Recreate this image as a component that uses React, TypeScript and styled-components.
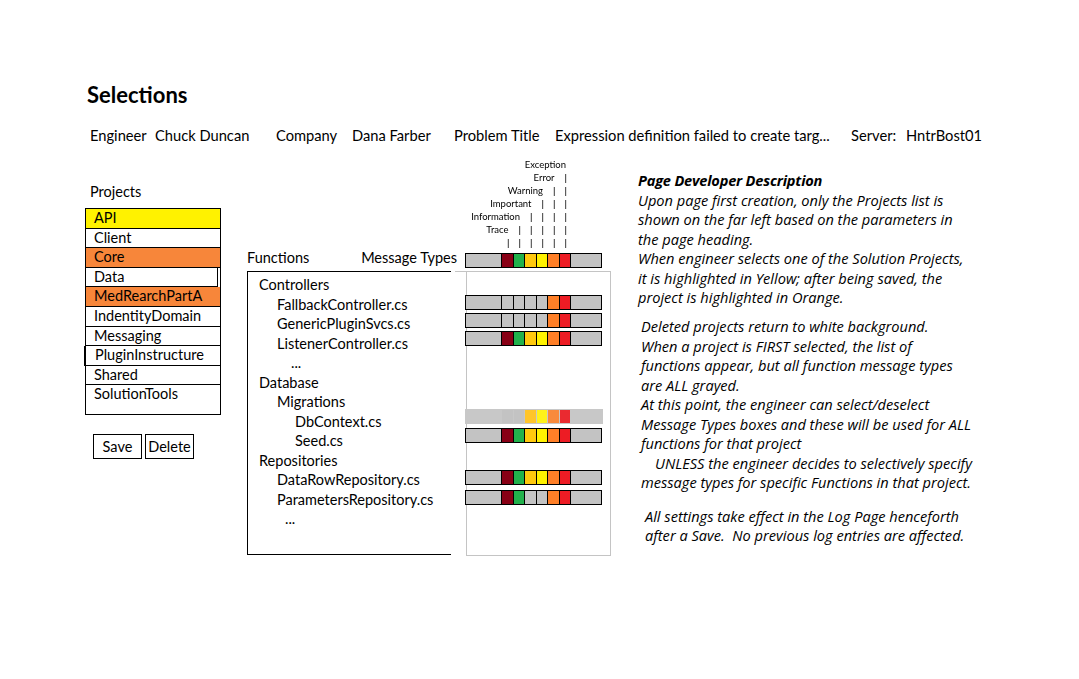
import React from "react";
import styled, { createGlobalStyle } from "styled-components";

const GlobalStyle = createGlobalStyle`
  html, body {
    margin: 0;
    padding: 0;
    background: #fff;
  }
  body {
    font-family: Lato, "Open Sans", "Liberation Sans", sans-serif;
    color: #000;
  }
`;

const COLORS = ["#880015", "#22b14c", "#ffc90e", "#fff200", "#ff7f27", "#ed1c24"];
const GHOST = ["#c8c8c8", "#c8c8c8", "#ffc52a", "#fff21a", "#f98a3c", "#ea2a30"];

const Page = styled.div`
  width: 1079px;
  height: 679px;
  box-sizing: border-box;
  padding: 82px 0 0 85px;
  overflow: hidden;
`;

const Title = styled.h1`
  margin: 0 0 0 2px;
  font-size: 22px;
  font-weight: 700;
  line-height: 25px;
`;

const InfoRow = styled.div`
  display: flex;
  margin: 18px 0 0 5px;
  font-size: 14.7px;
  line-height: 20px;
  white-space: nowrap;
`;

const Field = styled.div<{ $width?: number }>`
  display: flex;
  flex-shrink: 0;
  width: ${(p) => (p.$width ? `${p.$width}px` : "auto")};
`;

const FieldLabel = styled.span<{ $width: number }>`
  width: ${(p) => p.$width}px;
  flex-shrink: 0;
`;

const Main = styled.div`
  display: flex;
  align-items: flex-start;
  margin-top: 13px;
`;

/* ---- projects ---- */

const LeftColumn = styled.div`
  width: 136px;
  margin-right: 26px;
  flex-shrink: 0;
`;

const SectionLabel = styled.div`
  margin: 25px 0 7px 5px;
  font-size: 14.5px;
  line-height: 18px;
`;

const ProjectList = styled.div`
  box-sizing: border-box;
  width: 136px;
  border: 1.5px solid #000;
  padding-bottom: 9px;
`;

const ProjectRow = styled.div<{ $fill?: string; $inset?: boolean; $shift?: boolean; $last?: boolean }>`
  box-sizing: border-box;
  height: 19.6px;
  line-height: 18.6px;
  padding-left: ${(p) => (p.$shift ? 10 : 8)}px;
  font-size: 14.5px;
  white-space: nowrap;
  background: ${(p) => p.$fill || "transparent"};
  border-bottom: ${(p) => (p.$last ? "none" : "1px solid #000")};
  ${(p) => p.$inset && "border-right: 1px solid #000; margin-right: 2px;"}
  ${(p) => p.$shift && "border-left: 1px solid #000; margin-left: -2px;"}
`;

const ButtonRow = styled.div`
  display: flex;
  gap: 3px;
  margin: 19px 0 0 8px;
`;

const Button = styled.button`
  box-sizing: border-box;
  width: 49px;
  height: 25px;
  padding: 0;
  border: 1px solid #000;
  background: #fff;
  font-family: inherit;
  font-size: 14.5px;
  color: #000;
`;

/* ---- functions ---- */

const MiddleColumn = styled.div`
  width: 364px;
  margin-right: 27px;
  flex-shrink: 0;
`;

const TickChart = styled.div`
  width: 106px;
  margin-left: 218px;
  font-size: 9.5px;
  white-space: nowrap;
  will-change: transform;
`;

const TickRow = styled.div`
  display: flex;
  justify-content: flex-end;
  align-items: center;
  height: 13px;
`;

const TickLabel = styled.span`
  margin-right: 5px;
`;

const Pipe = styled.span`
  width: 11.5px;
  text-align: center;
  padding-left: 1px;
  box-sizing: border-box;
  font-family: "Liberation Sans", sans-serif;
`;

const HeaderRow = styled.div`
  display: flex;
  align-items: flex-start;
  height: 19px;
`;

const HeaderLabels = styled.div`
  display: flex;
  justify-content: space-between;
  box-sizing: border-box;
  width: 218px;
  padding-right: 8px;
  font-size: 14.5px;
  line-height: 18px;
  white-space: nowrap;
`;

const HeaderBarSlot = styled.div`
  margin-top: 4px;
`;

const Panel = styled.div`
  display: flex;
  margin-top: 3px;
  height: 285px;
`;

const TreeBox = styled.div`
  box-sizing: border-box;
  width: 204px;
  height: 284px;
  margin-right: 15px;
  padding-top: 3px;
  border: 1px solid #000;
  border-right: none;
`;

const TreeItem = styled.div<{ $indent: number }>`
  height: 19.5px;
  line-height: 19.5px;
  padding-left: ${(p) => p.$indent}px;
  font-size: 14.5px;
  white-space: nowrap;
`;

const BarBox = styled.div`
  position: relative;
  box-sizing: border-box;
  width: 145px;
  height: 285px;
  border: 1px solid #c4c4c4;

  &::before {
    content: "";
    position: absolute;
    top: -1px;
    left: -12px;
    width: 11px;
    border-top: 1px solid #c4c4c4;
  }
`;

const BarTrack = styled.div<{ $gap?: number; $ghost?: boolean }>`
  display: flex;
  box-sizing: border-box;
  width: ${(p) => (p.$ghost ? 138 : 137)}px;
  height: 15px;
  margin-top: ${(p) => p.$gap ?? 0}px;
  margin-left: ${(p) => (p.$gap === undefined ? 0 : -2)}px;
  border: 1px solid ${(p) => (p.$ghost ? "#c8c8c8" : "#000")};
  background: ${(p) => (p.$ghost ? "#c8c8c8" : "#c3c3c3")};
  flex-shrink: 0;
`;

const BarFiller = styled.div<{ $width?: number; $ghost?: boolean; $edge?: boolean }>`
  box-sizing: border-box;
  ${(p) => (p.$width ? `width: ${p.$width}px;` : "flex: 1;")}
  ${(p) => p.$edge && `border-left: 1px solid ${p.$ghost ? "transparent" : "#000"};`}
`;

const Segment = styled.div<{ $color: string; $ghost?: boolean }>`
  box-sizing: border-box;
  width: 11.5px;
  background: ${(p) => p.$color};
  border-left: 1px solid ${(p) => (p.$ghost ? "#c8c8c8" : "#000")};
`;

/* ---- description ---- */

const Description = styled.div`
  margin-top: 13px;
  font-family: "Open Sans", Lato, sans-serif;
  font-size: 14.6px;
  font-style: italic;
  white-space: nowrap;
`;

const Block = styled.div<{ $gap?: number; $indent?: number; $lh?: number }>`
  margin-top: ${(p) => p.$gap ?? 0}px;
  padding-left: ${(p) => p.$indent ?? 0}px;
  line-height: ${(p) => p.$lh ?? 19.5}px;
`;

const Line = styled.div<{ $indent?: number; $bold?: boolean }>`
  padding-left: ${(p) => p.$indent ?? 0}px;
  font-weight: ${(p) => (p.$bold ? 700 : 400)};
  letter-spacing: ${(p) => (p.$bold ? "-0.2px" : "0")};
`;

type BarProps = { on: boolean[]; gap?: number; ghost?: boolean };

function MessageBar({ on, gap, ghost }: BarProps) {
  const palette = ghost ? GHOST : COLORS;
  return (
    <BarTrack $gap={gap} $ghost={ghost}>
      <BarFiller $width={35} />
      {on.map((isOn, i) => (
        <Segment key={i} $ghost={ghost} $color={isOn ? palette[i] : "#c3c3c3"} />
      ))}
      <BarFiller $edge $ghost={ghost} />
    </BarTrack>
  );
}

const ALL = [true, true, true, true, true, true];
const UPPER = [false, false, false, false, true, true];
const NO_MID = [true, true, false, false, true, true];

const projects = [
  { name: "API", fill: "#fff200" },
  { name: "Client" },
  { name: "Core", fill: "#f7863a" },
  { name: "Data", inset: true },
  { name: "MedRearchPartA", fill: "#f7863a" },
  { name: "IndentityDomain" },
  { name: "Messaging" },
  { name: "PluginInstructure", shift: true },
  { name: "Shared" },
  { name: "SolutionTools" },
];

const tree = [
  { text: "Controllers", indent: 11 },
  { text: "FallbackController.cs", indent: 29 },
  { text: "GenericPluginSvcs.cs", indent: 29 },
  { text: "ListenerController.cs", indent: 29 },
  { text: "...", indent: 43 },
  { text: "Database", indent: 11 },
  { text: "Migrations", indent: 29 },
  { text: "DbContext.cs", indent: 47 },
  { text: "Seed.cs", indent: 47 },
  { text: "Repositories", indent: 11 },
  { text: "DataRowRepository.cs", indent: 29 },
  { text: "ParametersRepository.cs", indent: 29 },
  { text: "...", indent: 37 },
];

const bars: BarProps[] = [
  { on: UPPER, gap: 23 },
  { on: UPPER, gap: 3 },
  { on: ALL, gap: 3 },
  { on: [false, false, true, true, true, true], gap: 63, ghost: true },
  { on: ALL, gap: 4 },
  { on: ALL, gap: 27 },
  { on: NO_MID, gap: 5 },
];

const ticks = ["Exception", "Error", "Warning", "Important", "Information", "Trace", ""];

export default function App() {
  return (
    <Page>
      <GlobalStyle />
      <Title>Selections</Title>
      <InfoRow>
        <Field $width={186}>
          <FieldLabel $width={65}>Engineer</FieldLabel>
          <span>Chuck Duncan</span>
        </Field>
        <Field $width={178}>
          <FieldLabel $width={76}>Company</FieldLabel>
          <span>Dana Farber</span>
        </Field>
        <Field $width={397}>
          <FieldLabel $width={101}>Problem Title</FieldLabel>
          <span>Expression definition failed to create targ...</span>
        </Field>
        <Field>
          <FieldLabel $width={55}>Server:</FieldLabel>
          <span>HntrBost01</span>
        </Field>
      </InfoRow>

      <Main>
        <LeftColumn>
          <SectionLabel>Projects</SectionLabel>
          <ProjectList>
            {projects.map((p, i) => (
              <ProjectRow
                key={p.name}
                $fill={p.fill}
                $inset={p.inset}
                $shift={p.shift}
                $last={i === projects.length - 1}
              >
                {p.name}
              </ProjectRow>
            ))}
          </ProjectList>
          <ButtonRow>
            <Button>Save</Button>
            <Button>Delete</Button>
          </ButtonRow>
        </LeftColumn>

        <MiddleColumn>
          <TickChart>
            {ticks.map((label, i) => (
              <TickRow key={i}>
                {label && <TickLabel>{label}</TickLabel>}
                {Array.from({ length: i }).map((_, j) => (
                  <Pipe key={j}>|</Pipe>
                ))}
              </TickRow>
            ))}
          </TickChart>
          <HeaderRow>
            <HeaderLabels>
              <span>Functions</span>
              <span>Message Types</span>
            </HeaderLabels>
            <HeaderBarSlot>
              <MessageBar on={ALL} />
            </HeaderBarSlot>
          </HeaderRow>
          <Panel>
            <TreeBox>
              {tree.map((t, i) => (
                <TreeItem key={i} $indent={t.indent}>
                  {t.text}
                </TreeItem>
              ))}
            </TreeBox>
            <BarBox>
              {bars.map((b, i) => (
                <MessageBar key={i} {...b} />
              ))}
            </BarBox>
          </Panel>
        </MiddleColumn>

        <Description>
          <Block>
            <Line $bold>Page Developer Description</Line>
            <Line>Upon page first creation, only the Projects list is</Line>
            <Line>shown on the far left based on the parameters in</Line>
            <Line>the page heading.</Line>
            <Line>When engineer selects one of the Solution Projects,</Line>
            <Line>it is highlighted in Yellow; after being saved, the</Line>
            <Line>project is highlighted in Orange.</Line>
          </Block>
          <Block $gap={9.5} $indent={3}>
            <Line>Deleted projects return to white background.</Line>
            <Line>When a project is FIRST selected, the list of</Line>
            <Line>functions appear, but all function message types</Line>
            <Line>are ALL grayed.</Line>
            <Line>At this point, the engineer can select/deselect</Line>
            <Line>Message Types boxes and these will be used for ALL</Line>
            <Line>functions for that project</Line>
            <Line $indent={14}>UNLESS the engineer decides to selectively specify</Line>
            <Line>message types for specific Functions in that project.</Line>
          </Block>
          <Block $gap={14.5} $indent={7} $lh={19}>
            <Line>All settings take effect in the Log Page henceforth</Line>
            <Line>after a Save.&nbsp; No previous log entries are affected.</Line>
          </Block>
        </Description>
      </Main>
    </Page>
  );
}
